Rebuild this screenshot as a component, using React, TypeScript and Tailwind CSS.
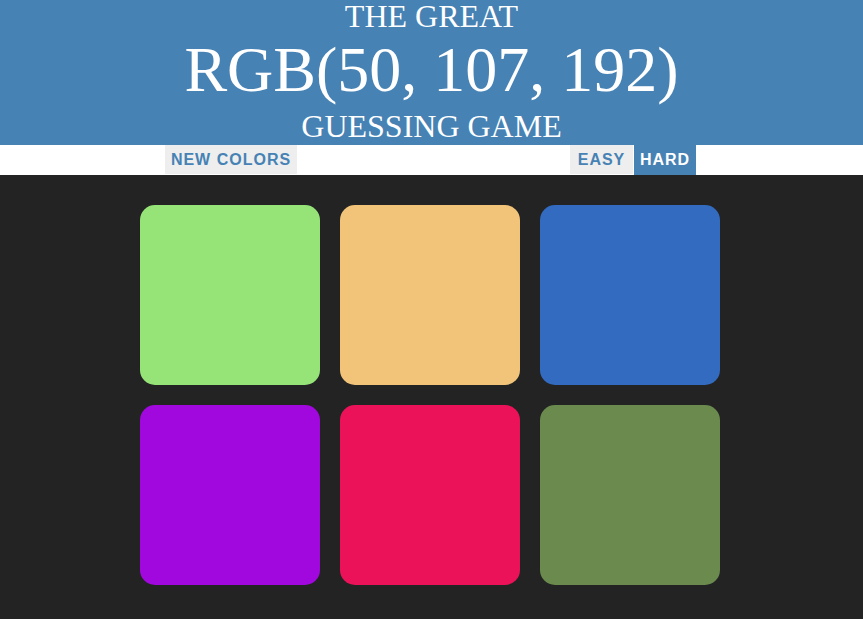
const colors = [
  "#96e478",
  "#f2c47a",
  "#326bc0",
  "#a008dd",
  "#ec1259",
  "#6a8a4e",
];

const App = () => {
  return (
    <div className="min-h-[619px] bg-[#232323]">
      {/* header */}
      <h1 className="flex h-[145px] flex-col items-center bg-[#4682b4] text-center font-['Liberation_Serif',serif] font-normal uppercase leading-none text-white">
        <span className="text-[32px] leading-[32px]">The Great</span>
        <span className="mt-[6px] text-[64px] leading-[64px]">RGB(50, 107, 192)</span>
        <span className="mt-[8px] text-[32px] leading-[32px]">Guessing Game</span>
      </h1>

      {/* stripe */}
      <div className="flex h-[30px] justify-center bg-white pr-[2px] font-['Liberation_Sans',Arial,sans-serif] text-[16px] font-bold tracking-[1px]">
        <div className="flex w-[531px] justify-between">
          <button className="h-[29px] w-[132px] bg-[#eeeeee] uppercase text-[#4682b4]">New Colors</button>
          <div className="flex">
            <button className="h-[29px] w-[63px] bg-[#eeeeee] uppercase text-[#4682b4]">Easy</button>
            <button className="ml-[1px] h-[30px] w-[62px] bg-[#4682b4] uppercase text-white">Hard</button>
          </div>
        </div>
      </div>

      {/* squares */}
      <div className="mx-auto grid w-[583px] grid-cols-[repeat(3,180px)] gap-[20px] pt-[30px]">
        {colors.map((c) => (
          <div
            key={c}
            className="h-[180px] w-[180px] rounded-[15px]"
            style={{ backgroundColor: c }}
          />
        ))}
      </div>
    </div>
  );
};

export default App;
